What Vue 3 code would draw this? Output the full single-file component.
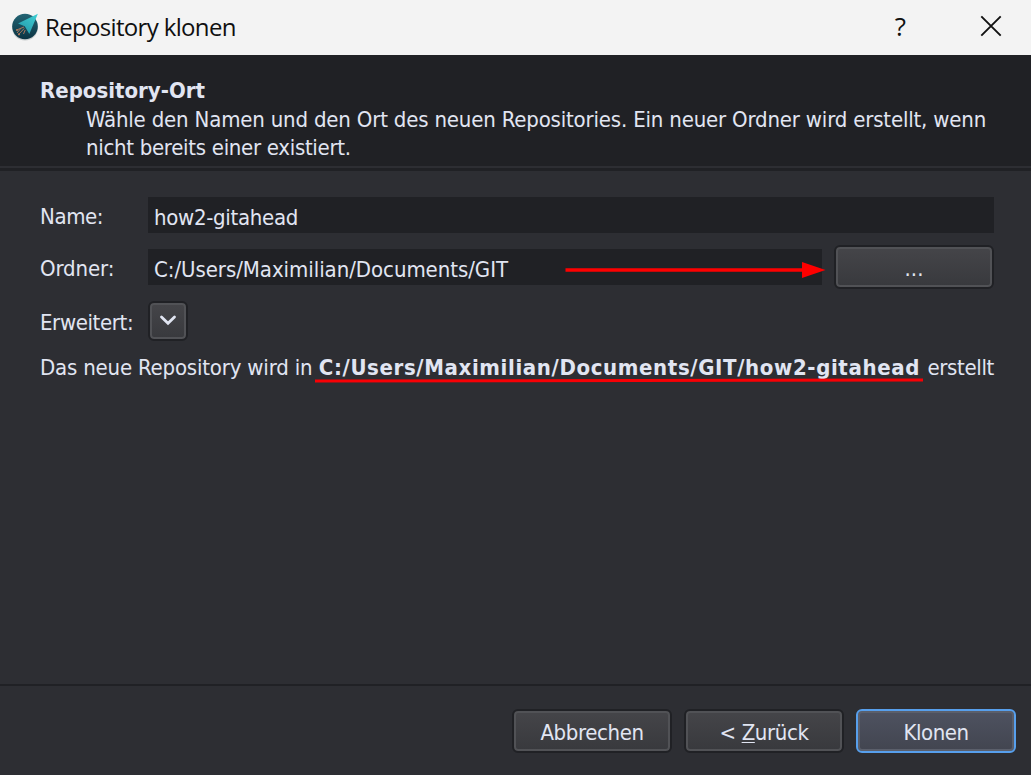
<script setup>
</script>

<template>
  <div class="dialog">
    <header class="titlebar">
      <svg class="logo" viewBox="0 0 30 30" width="30" height="30">
        <defs>
          <linearGradient id="disc" x1="0" y1="0" x2="0" y2="1">
            <stop offset="0" stop-color="#236474" />
            <stop offset="1" stop-color="#0b3342" />
          </linearGradient>
          <linearGradient id="ship" x1="1" y1="0" x2="0.3" y2="1">
            <stop offset="0" stop-color="#3fd0d4" />
            <stop offset="1" stop-color="#259aab" />
          </linearGradient>
        </defs>
        <circle cx="15" cy="16.5" r="13" fill="#c9cccd" />
        <circle cx="15" cy="15.5" r="12.8" fill="url(#disc)" />
        <path d="M27.9 2.8 8 12.4 14.8 15.2 19.3 23Z" fill="url(#ship)" />
        <path d="M14 16 6.5 19M14.2 17.5 8.5 23.5M15.2 19 13.5 23M11 17.2 7 22" stroke="#a8755c" stroke-width="1" fill="none" />
        <circle cx="7" cy="19" r="1" fill="#b1785c" />
        <circle cx="9" cy="23.3" r="1.1" fill="#b1785c" />
      </svg>
      <span class="title">Repository klonen</span>
      <span class="help">?</span>
      <svg class="close" viewBox="0 0 22 22" width="22" height="22">
        <path d="M1.3 1.3 20.7 20.7M20.7 1.3 1.3 20.7" stroke="#111" stroke-width="1.9" />
      </svg>
    </header>

    <section class="banner">
      <h1>Repository-Ort</h1>
      <p><span class="l1">Wähle den Namen und den Ort des neuen Repositories. Ein neuer Ordner wird erstellt, wenn</span><br><span class="l2">nicht bereits einer existiert.</span></p>
    </section>

    <main class="form">
      <div class="row name">
        <label><span class="t-name">Name:</span></label>
        <div class="field"><span class="v-name">how2-gitahead</span></div>
      </div>
      <div class="row folder">
        <label><span class="t-folder">Ordner:</span></label>
        <div class="field">
          <span class="v-path">C:/Users/Maximilian/Documents/GIT</span>
          <svg class="arrow" viewBox="0 0 262 18" width="262" height="18">
            <path d="M0.5 9H240" stroke="#fe0000" stroke-width="3.4" />
            <path d="M237 1 260.5 9 237 17Z" fill="#fe0000" />
          </svg>
        </div>
        <button class="btn browse">...</button>
      </div>
      <div class="row advanced">
        <label><span class="t-adv">Erweitert:</span></label>
        <button class="btn expand">
          <svg viewBox="0 0 18 12" width="18" height="12">
            <path d="M2.5 3 9 9.2 15.5 3" fill="none" stroke="#e1e5f2" stroke-width="2.8" stroke-linecap="round" />
          </svg>
        </button>
      </div>
      <p class="summary"><span class="s1">Das neue Repository wird in</span><strong><span class="s2">C:/Users/Maximilian/Documents/GIT/how2-gitahead</span></strong><span class="s3">erstellt</span></p>
    </main>

    <footer class="actions">
      <button class="btn"><span class="b1">Abbrechen</span></button>
      <button class="btn"><span class="b2">&lt; <span class="mnemonic">Z</span>urück</span></button>
      <button class="btn primary"><span class="b3">Klonen</span></button>
    </footer>
  </div>
</template>

<style>
html, body { margin: 0; background: #2d2e33; overflow: hidden; }
</style>

<style scoped>
.dialog {
  width: 1031px;
  height: 775px;
  display: flex;
  flex-direction: column;
  background: #2d2e33;
  color: #e1e5f2;
  font: 22px/28px "DejaVu Sans Condensed", "DejaVu Sans", sans-serif;
  font-stretch: condensed;
  white-space: nowrap;
}
.dialog * { box-sizing: border-box; }
h1, p { margin: 0; font-size: 22px; }
.titlebar {
  height: 55px;
  flex: none;
  display: flex;
  align-items: center;
  background: #f3f3f3;
  color: #101010;
  font-family: "Open Sans", "Noto Sans", sans-serif;
  font-stretch: normal;
  font-size: 24px;
  padding: 0 29px 3px 10px;
}
.logo { margin-right: 5px; }
.title { flex: 1; padding-top: 2px; letter-spacing: -0.66px; }
.help { margin-right: 74px; font-size: 26px; font-weight: 500; }
.banner {
  height: 111px;
  flex: none;
  background: #202125;
  padding: 21px 40px 0;
}
h1 { font-weight: bold; line-height: 29px; }
.banner p { padding: 1px 0 0 46px; }
.l1 { letter-spacing: -0.18px; }
.l2 { letter-spacing: -0.3px; }
.t-name { letter-spacing: -0.4px; }
.t-folder { letter-spacing: -0.1px; }
.t-adv { letter-spacing: -0.38px; }
.v-name { letter-spacing: -0.3px; }
.v-path { letter-spacing: -0.05px; }
.form {
  flex: 1;
  border-top: 2px solid #2d2e33;
  box-shadow: inset 0 3px #202125;
  padding: 29px 37px 0 40px;
}
.row { display: flex; align-items: center; }
.row label { width: 108px; flex: none; padding-top: 3px; }
.name { height: 36px; }
.folder { height: 44px; margin-top: 12px; }
.advanced { height: 40px; margin-top: 12px; }
.field {
  flex: 1;
  height: 36px;
  background: #202125;
  display: flex;
  align-items: center;
  padding: 5px 0 0 6px;
  position: relative;
}
.arrow { position: absolute; left: 417px; top: 12px; }
.btn {
  width: 160px;
  height: 44px;
  flex: none;
  padding: 3px 0 0;
  display: flex;
  align-items: center;
  justify-content: center;
  font: inherit;
  color: inherit;
  border: 2px solid #202125;
  border-radius: 6px;
  background: linear-gradient(#454549, #38393d);
  box-shadow: inset 0 0 0 2px #515256;
}
.browse { margin-left: 12px; }
.expand { width: 40px; height: 40px; padding: 0 0 2px; }
.primary {
  border-color: #579fec;
  background: linear-gradient(#4e5260, #424550);
  box-shadow: inset 0 0 0 2px #5b5f6b;
}
.b1, .b2 { letter-spacing: -0.38px; }
.b3 { letter-spacing: -0.45px; }
.summary { margin-top: 13px; display: flex; }
.s1 { width: 279px; letter-spacing: -0.19px; }
.s2 { display: block; letter-spacing: 0.63px; }
.s3 { letter-spacing: -0.35px; padding-left: 1px; }
.summary strong {
  width: 608px;
  height: 30px;
  position: relative;
}
.summary strong::after {
  content: "";
  position: absolute;
  left: -4px;
  top: 25px;
  width: 608px;
  height: 3px;
  background: #f80005;
  transform: rotate(-0.08deg);
}
.actions {
  height: 91px;
  flex: none;
  border-top: 2px solid #202125;
  display: flex;
  justify-content: flex-end;
  gap: 12px;
  padding: 23px 15px 0;
}
.mnemonic { text-decoration: underline; text-decoration-thickness: 1px; text-underline-offset: 2px; }
</style>
